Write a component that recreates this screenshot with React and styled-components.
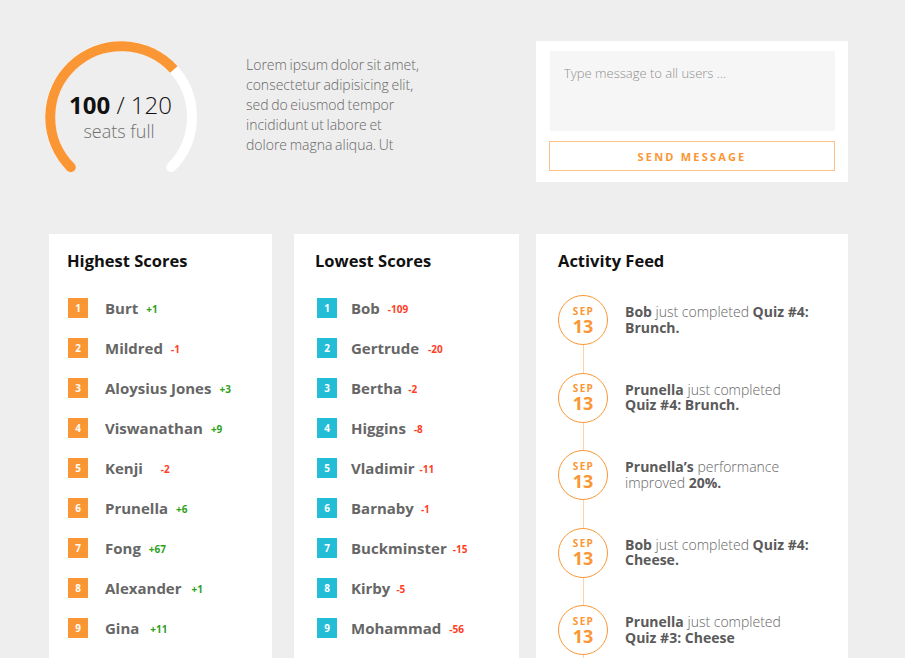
import React from 'react';
import styled, { createGlobalStyle } from 'styled-components';

const ORANGE = '#fb9634';
const BLUE = '#24bdd7';

const Global = createGlobalStyle`
  html, body {
    margin: 0;
    padding: 0;
    background: #eeeeee;
    overflow: hidden;
    font-family: "Open Sans", "Liberation Sans", sans-serif;
  }
  * { box-sizing: border-box; }
`

const Page = styled.div`
  padding: 41px 0 0 49px;
  width: 905px;
  height: 658px;
  overflow: hidden;
`
const TopRow = styled.div`
  display: flex;
  align-items: flex-start;
  height: 193px;
`
const Gauge = styled.div`
  position: relative;
  width: 152px;
  height: 152px;
  margin-left: -4px;
  flex-shrink: 0;
`
const GaugeText = styled.div`
  position: absolute;
  inset: 0;
  display: flex;
  flex-direction: column;
  align-items: center;
  justify-content: center;
  padding-bottom: 1px;
`
const Count = styled.div`
  font-size: 24px;
  line-height: 28px;
  color: #111;
  font-weight: 300;
  margin-left: -1px;
  b { font-weight: 700; }
`
const CountLabel = styled.div`
  font-size: 18px;
  line-height: 24px;
  color: #707070;
  font-weight: 300;
  margin-left: -4px;
`
const Intro = styled.p`
  margin: 14px 0 0 49px;
  width: 200px;
  flex-shrink: 0;
  font-size: 14px;
  line-height: 20px;
  font-weight: 300;
  color: #666;
  word-spacing: -1px;
  white-space: nowrap;
`
const MessagePanel = styled.div`
  margin-left: 90px;
  width: 312px;
  flex-shrink: 0;
  background: #fff;
  padding: 10px 13px 11px 14px;
`
const MessageInput = styled.textarea`
  display: block;
  width: 285px;
  height: 80px;
  border: none;
  resize: none;
  background: #f6f6f6;
  padding: 13px 14px;
  font-family: inherit;
  font-size: 13px;
  font-weight: 300;
  outline: none;
  &::placeholder { color: #8f8f8f; }
`
const SendButton = styled.button`
  display: block;
  margin: 10px 0 0 -1px;
  width: 286px;
  height: 30px;
  background: #fff;
  border: 1px solid #fcc184;
  color: ${ORANGE};
  font-family: inherit;
  font-size: 11px;
  font-weight: 700;
  letter-spacing: 2.2px;
`
const Cards = styled.div`
  display: flex;
  align-items: flex-start;
`
const Card = styled.div`
  width: ${p => p.$w}px;
  margin-left: ${p => p.$ml || 0}px;
  flex-shrink: 0;
  background: #fff;
  padding: 17px 0 0 ${p => p.$pad}px;
  height: 520px;
`
const CardTitle = styled.h2`
  margin: 0;
  font-size: 16.5px;
  line-height: 20px;
  font-weight: 700;
  color: #111;
`
const ScoreList = styled.ul`
  list-style: none;
  margin: 17px 0 0 ${p => p.$indent}px;
  padding: 0;
`
const ScoreRow = styled.li`
  display: flex;
  align-items: center;
  height: 40px;
`
const Rank = styled.span`
  width: 20px;
  height: 20px;
  flex-shrink: 0;
  background: ${p => p.$color};
  color: #fff;
  font-size: 10px;
  font-weight: 700;
  display: flex;
  align-items: center;
  justify-content: center;
  margin-right: ${p => p.$gap}px;
`
const Name = styled.span`
  font-size: 15px;
  font-weight: 700;
  color: #666;
`
const Delta = styled.span`
  font-size: 10px;
  font-weight: 700;
  color: ${p => (p.$up ? '#2f9f1c' : '#ff3d1f')};
  margin-left: ${p => p.$gap || 8}px;
  padding-top: 2px;
`
const Feed = styled.ul`
  list-style: none;
  margin: 24px 0 0;
  padding: 0;
`
const FeedItem = styled.li`
  display: flex;
  align-items: flex-start;
`
const Timeline = styled.div`
  display: flex;
  flex-direction: column;
  align-items: center;
  width: 50px;
  flex-shrink: 0;
`
const DateBadge = styled.div`
  width: 50px;
  height: 50px;
  border-radius: 50%;
  border: 1px solid ${ORANGE};
  color: ${ORANGE};
  display: flex;
  flex-direction: column;
  align-items: center;
  justify-content: center;
  font-weight: 700;
  padding-top: 1px;
`
const Month = styled.span`
  font-size: 10px;
  line-height: 11px;
  letter-spacing: 1.3px;
  margin-left: 1px;
`
const Day = styled.span`
  font-size: 18px;
  line-height: 19px;
`
const Connector = styled.div`
  width: 1px;
  height: 27.6px;
  background: #fcd2a6;
`
const FeedText = styled.div`
  height: 50px;
  display: flex;
  flex-direction: column;
  justify-content: center;
  margin-left: 17px;
  font-size: 14px;
  line-height: 15.5px;
  font-weight: 300;
  color: #666;
  white-space: nowrap;
  padding-bottom: 1px;
  b { font-weight: 700; color: #5a5a5a; }
`

const highest = [
  ['Burt', '+1'], ['Mildred', '-1'], ['Aloysius Jones', '+3'], ['Viswanathan', '+9'],
  ['Kenji', '-2', 18], ['Prunella', '+6'], ['Fong', '+67'], ['Alexander', '+1', 10],
  ['Gina', '+11', 11], ['Hugo', '+2'],
];
const lowest = [
  ['Bob', '-109', 8], ['Gertrude', '-20', 9], ['Bertha', '-2', 6], ['Higgins', '-8', 8],
  ['Vladimir', '-11', 5], ['Barnaby', '-1', 7], ['Buckminster', '-15', 6], ['Kirby', '-5', 6],
  ['Mohammad', '-56', 8],
];

const intro = [
  'Lorem ipsum dolor sit amet,',
  'consectetur adipisicing elit,',
  'sed do eiusmod tempor',
  'incididunt ut labore et',
  'dolore magna aliqua. Ut',
];

const feed = [
  [<><b>Bob</b> just completed <b>Quiz #4:</b></>, <b>Brunch.</b>],
  [<><b>Prunella</b> just completed</>, <b>Quiz #4: Brunch.</b>],
  [<><b>Prunella’s</b> performance</>, <>improved <b>20%.</b></>],
  [<><b>Bob</b> just completed <b>Quiz #4:</b></>, <b>Cheese.</b>],
  [<><b>Prunella</b> just completed</>, <b>Quiz #3: Cheese</b>],
];

const ScoreCard = ({ title, rows, color, w, ml, pad, indent, gap }) => (
  <Card $w={w} $ml={ml} $pad={pad}>
    <CardTitle>{title}</CardTitle>
    <ScoreList $indent={indent}>
      {rows.map(([name, delta, dgap], i) => (
        <ScoreRow key={name}>
          <Rank $color={color} $gap={gap}>{i + 1}</Rank>
          <Name>{name}</Name>
          <Delta $up={delta[0] === '+'} $gap={dgap}>{delta}</Delta>
        </ScoreRow>
      ))}
    </ScoreList>
  </Card>
)

export default function App() {
  return (
    <Page>
      <Global />
      <TopRow>
        <Gauge>
          <svg width="152" height="152" viewBox="0 0 152 152">
            <path d="M25.8 126.2 A71 71 0 1 1 126.2 126.2" fill="none" stroke="#fff" strokeWidth="10" strokeLinecap="round" />
            <path d="M25.8 126.2 A71 71 0 1 1 128.8 28.5" fill="none" stroke={ORANGE} strokeWidth="10" />
            <circle cx="25.8" cy="126.2" r="5" fill={ORANGE} />
          </svg>
          <GaugeText>
            <Count><b>100</b> / 120</Count>
            <CountLabel>seats full</CountLabel>
          </GaugeText>
        </Gauge>
        <Intro>
          {intro.map((line, i) => (
            <React.Fragment key={i}>{line}{i < intro.length - 1 && <br />}</React.Fragment>
          ))}
        </Intro>
        <MessagePanel>
          <MessageInput placeholder="Type message to all users ..." />
          <SendButton>SEND MESSAGE</SendButton>
        </MessagePanel>
      </TopRow>
      <Cards>
        <ScoreCard title="Highest Scores" rows={highest} color={ORANGE} w={223} pad={18} indent={1} gap={17} />
        <ScoreCard title="Lowest Scores" rows={lowest} color={BLUE} w={225} ml={22} pad={21} indent={2} gap={14} />
        <Card $w={312} $ml={17} $pad={22}>
          <CardTitle>Activity Feed</CardTitle>
          <Feed>
            {feed.map(([a, b], i) => (
              <FeedItem key={i}>
                <Timeline>
                  <DateBadge>
                    <Month>SEP</Month>
                    <Day>13</Day>
                  </DateBadge>
                  <Connector />
                </Timeline>
                <FeedText>
                  <span>{a}</span>
                  <span>{b}</span>
                </FeedText>
              </FeedItem>
            ))}
          </Feed>
        </Card>
      </Cards>
    </Page>
  );
}
